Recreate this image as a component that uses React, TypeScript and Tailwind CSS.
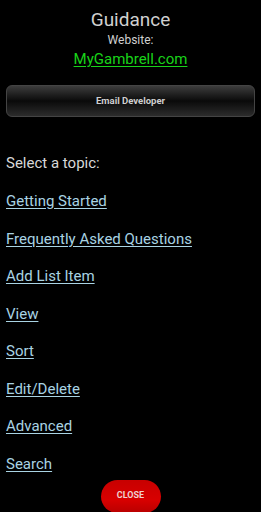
const topics = [
  'Getting Started',
  'Frequently Asked Questions',
  'Add List Item',
  'View',
  'Sort',
  'Edit/Delete',
  'Advanced',
  'Search',
]

export default function App() {
  return (
    <div className="w-[261px] h-[512px] bg-black overflow-hidden font-['Roboto',sans-serif] flex flex-col">
      <div className="shrink-0 flex flex-col items-center pt-[7px]">
        <h1 className="text-[19px] leading-[26px] text-[#d0d0d0]">Guidance</h1>
        <p className="text-[12px] leading-[15px] text-[#d0d0d0]">Website:</p>
        <a className="text-[15px] leading-[22px] text-[#19d219] underline underline-offset-2">MyGambrell.com</a>
      </div>

      <button className="shrink-0 mx-[6px] mt-[15px] h-[32px] rounded-[6px] border border-[#444] bg-[linear-gradient(to_bottom,#3c3c3c,#0a0a0a_50%,#2c2c2c)] text-[9.5px] font-bold text-[#cfcfcf]">
        Email Developer
      </button>

      <div className="shrink-0 px-[6px] pt-[36px] flex flex-col">
        <p className="text-[15px] leading-[20px] text-[#d8d8d8]">Select a topic:</p>
        <div className="flex flex-col gap-[17.5px] mt-[18px]">
          {topics.map(t => (
            <a key={t} className="text-[15px] leading-[20px] text-[#a9d3e3] underline underline-offset-2 self-start">
              {t}
            </a>
          ))}
        </div>
      </div>

      <div className="shrink-0 flex justify-center mt-[6px]">
        <button className="w-[60px] h-[33px] rounded-full bg-[linear-gradient(to_bottom,#c80000,#d80000_60%,#b80000)] text-[9px] font-bold text-[#eed0d0]">
          CLOSE
        </button>
      </div>
    </div>
  )
}
